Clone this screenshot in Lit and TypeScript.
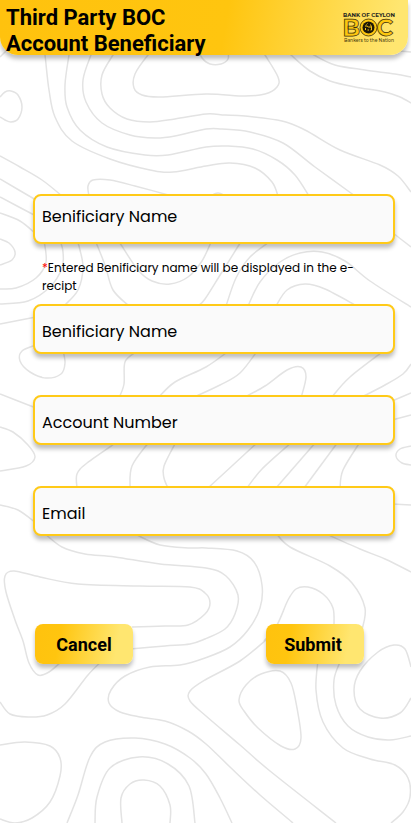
import { LitElement, html, svg, css } from "lit";
import { customElement } from "lit/decorators.js";

type Point = [number, number];

/** Contour lines of the background, as points that a smooth curve runs through. */
const OPEN_LINES: Point[][] = [
  [[0, 97], [5, 92], [11, 91], [18, 95], [22, 107], [18, 119], [11, 122], [5, 120], [0, 117]],
  [[0, 57], [6, 51]],
  [[43, 45], [45, 55], [49, 90], [55, 117], [72, 141], [110, 159], [150, 170], [173, 172], [206, 166], [230, 163], [255, 168], [272, 182], [278, 196]],
  [[71, 45], [69, 55], [65, 85], [67, 107], [80, 130], [107, 147], [145, 155], [168, 155], [206, 147], [228, 146], [253, 149], [277, 160], [295, 175], [309, 196]],
  [[96, 45], [91, 55], [83, 80], [86, 102], [102, 123], [130, 135], [155, 138], [175, 136], [206, 129], [222, 129], [250, 132], [283, 143], [315, 167], [355, 196]],
  [[120, 45], [113, 55], [102, 75], [102, 94], [110, 108], [127, 119], [150, 122], [175, 119], [206, 114], [225, 115], [245, 116], [282, 121], [305, 130], [340, 150], [380, 165], [398, 176], [411, 192]],
  [[158, 45], [148, 55], [135, 74], [134, 88], [142, 95], [160, 97], [206, 94], [245, 96], [265, 94], [277, 87], [278, 77], [265, 55], [262, 50]],
  [[199, 50], [202, 58], [210, 64], [221, 64], [228, 59], [228, 50]],
  [[284, 48], [291, 55], [310, 71], [330, 81], [355, 87], [385, 92], [400, 97], [411, 103]],
  [[304, 48], [314, 55], [335, 65], [365, 70], [395, 74], [411, 77]],
  [[400, 51], [411, 52]],
  [[89, 196], [88, 186], [93, 180], [110, 180], [135, 186], [172, 196]],
  [[210, 196], [218, 193], [226, 196]],
  [[0, 156], [20, 167], [42, 180], [62, 196]],
  [[0, 179], [36, 200]],
  [[0, 197], [36, 216]],
  [[0, 213], [20, 221], [36, 234]],
  [[0, 239], [9, 243], [15, 252], [12, 260], [0, 265]],
  [[0, 289], [16, 288], [36, 278], [46, 262], [44, 240]],
  [[0, 304], [28, 301], [50, 287], [62, 268], [63, 252], [60, 240]],
  [[0, 324], [36, 317]],
  [[65, 305], [78, 290], [83, 268], [80, 250], [77, 240]],
  [[95, 240], [105, 265], [113, 290], [129, 306]],
  [[118, 240], [138, 270], [152, 281], [170, 284], [188, 277], [202, 261], [212, 240]],
  [[198, 306], [205, 299], [222, 272], [242, 240]],
  [[226, 306], [236, 278], [250, 257], [272, 240]],
  [[248, 306], [260, 282], [280, 262], [300, 253], [322, 252], [345, 261], [370, 281], [411, 307]],
  [[276, 306], [287, 290], [305, 284], [325, 289], [357, 306]],
  [[393, 233], [411, 247]],
  [[36, 345], [22, 351], [20, 361], [30, 372], [46, 378], [61, 374], [65, 363], [63, 350]],
  [[136, 352], [125, 362], [124, 384], [119, 398]],
  [[158, 398], [175, 382], [206, 367], [230, 350]],
  [[192, 398], [220, 385], [240, 373], [258, 350]],
  [[243, 398], [265, 386], [287, 370], [301, 367], [306, 377], [301, 398]],
  [[331, 398], [350, 377], [385, 350]],
  [[360, 398], [385, 385], [403, 374], [411, 364]],
  [[392, 401], [411, 393]],
  [[392, 420], [411, 415]],
  [[0, 394], [36, 408]],
  [[0, 427], [13, 432], [28, 445], [35, 457], [26, 466], [0, 471]],
  [[117, 442], [87, 463], [77, 474], [77, 488]],
  [[149, 442], [132, 466], [130, 488]],
  [[176, 442], [164, 466], [164, 478], [168, 488]],
  [[258, 442], [208, 488]],
  [[292, 442], [262, 469], [247, 488]],
  [[316, 442], [276, 488]],
  [[338, 442], [304, 488]],
  [[360, 442], [343, 470], [340, 488]],
  [[411, 446], [400, 449], [396, 456], [402, 463], [411, 465]],
  [[392, 504], [411, 505]],
  [[0, 505], [18, 510], [36, 523]],
  [[44, 533], [62, 547], [85, 554], [115, 557], [160, 564], [206, 568], [226, 576], [238, 595], [235, 614], [225, 629], [205, 639], [190, 644], [165, 646], [130, 649]],
  [[135, 534], [160, 545], [190, 548], [206, 548], [237, 551], [254, 562], [262, 585], [260, 608], [248, 630], [230, 647], [205, 658], [180, 665], [150, 667], [125, 676], [111, 690], [109, 703], [120, 712], [140, 717], [165, 721], [188, 731], [206, 744], [230, 767], [260, 795], [293, 823]],
  [[276, 533], [290, 547], [330, 566], [352, 583], [365, 608], [362, 630]],
  [[324, 533], [360, 549], [385, 559], [411, 572]],
  [[264, 641], [277, 625], [288, 600], [296, 589], [308, 587], [323, 594], [333, 608], [334, 626]],
  [[340, 662], [334, 680], [336, 705], [348, 726], [368, 737], [390, 740], [411, 736]],
  [[132, 627], [165, 626], [188, 625], [205, 614], [210, 603], [205, 593], [190, 587], [140, 586], [78, 584], [40, 577], [14, 571], [5, 576], [6, 592], [15, 620], [23, 641], [29, 663], [38, 675], [49, 672], [63, 660]],
  [[103, 660], [88, 675], [65, 704], [47, 715], [28, 717], [10, 714], [0, 702]],
  [[266, 640], [240, 661], [205, 680], [190, 691], [190, 701], [206, 716], [240, 745], [270, 771], [336, 823]],
  [[0, 745], [25, 742], [50, 746], [60, 758], [60, 776], [50, 802], [32, 818], [15, 823], [0, 819]],
  [[67, 823], [78, 795], [90, 757], [105, 742], [135, 738], [165, 744], [190, 758], [206, 774], [220, 798], [232, 823]],
  [[95, 823], [97, 797], [110, 768], [139, 757], [168, 764], [189, 786], [195, 823]],
  [[122, 823], [121, 798], [130, 784], [144, 780], [160, 786], [170, 805], [170, 823]],
  [[318, 660], [316, 690], [323, 722], [343, 748], [370, 759], [395, 765], [408, 778], [410, 797], [403, 812], [391, 823]],
  [[411, 667], [405, 649], [394, 645], [378, 652], [360, 671], [354, 690], [360, 709], [380, 718], [400, 713], [411, 698]],
];

const CLOSED_LINES: Point[][] = [
  [[239, 700], [246, 685], [261, 674], [280, 671], [291, 683], [297, 708], [301, 738], [295, 749], [281, 746], [258, 728], [244, 711]],
];

/** Turns points into a smooth path (Catmull-Rom spline as cubic curves). */
function smoothPath(points: Point[], closed = false): string {
  const n = points.length;
  const at = (i: number): Point =>
    closed ? points[(i + n) % n] : points[Math.max(0, Math.min(n - 1, i))];
  let d = `M${points[0][0]} ${points[0][1]}`;
  for (let i = 0; i < (closed ? n : n - 1); i++) {
    const [a, b, c, e] = [at(i - 1), at(i), at(i + 1), at(i + 2)];
    const control = [
      b[0] + (c[0] - a[0]) / 6, b[1] + (c[1] - a[1]) / 6,
      c[0] - (e[0] - b[0]) / 6, c[1] - (e[1] - b[1]) / 6,
    ].map((v) => v.toFixed(1));
    d += `C${control.join(" ")} ${c[0]} ${c[1]}`;
  }
  return closed ? d + "Z" : d;
}

@customElement("contour-background")
class ContourBackground extends LitElement {
  static styles = css`
    :host { display: block; }
    .lines { display: block; width: 100%; height: 100%; fill: none; stroke: #e3e3e3; stroke-width: 1.5; }
  `;

  render() {
    return html`
      <svg class="lines" viewBox="0 0 411 823" preserveAspectRatio="xMidYMin slice" aria-hidden="true">
        ${OPEN_LINES.map((line) => svg`<path d=${smoothPath(line)} />`)}
        ${CLOSED_LINES.map((line) => svg`<path d=${smoothPath(line, true)} />`)}
      </svg>
    `;
  }
}

@customElement("boc-logo")
class BocLogo extends LitElement {
  static styles = css`
    :host { display: block; }
    .logo { display: block; width: 54px; height: 32px; font-family: Montserrat, Poppins, Inter, sans-serif; }
    .name { font-size: 11px; font-weight: 700; fill: #231f20; }
    .tagline { font-size: 9px; font-weight: 500; fill: #4a3c10; }
    .initial { font-size: 46px; font-weight: 700; fill: #fdc70f; stroke: #3d300a; stroke-width: 1.5; }
    .ring { fill: #fdc70f; stroke: #2b220a; stroke-width: 1.5; }
    .seal { fill: #1d1808; }
    .lion { fill: none; stroke: #f5c21a; stroke-width: 2; stroke-linejoin: round; }
  `;

  render() {
    return html`
      <svg class="logo" viewBox="0 0 108 64" role="img" aria-label="Bank of Ceylon">
        <text class="name" x="54" y="10" text-anchor="middle">BANK OF CEYLON</text>
        <text class="initial" x="1" y="47">B</text>
        <text class="initial" x="69" y="47">C</text>
        <circle class="ring" cx="53" cy="31" r="17" />
        <circle class="seal" cx="53" cy="31" r="12" />
        <path class="lion" d="M46 28h4l3 2h6M47 36v-4M51 36h3M57 36h2v-6l-2-5M49 25l2-2" />
        <text class="tagline" x="54" y="59" text-anchor="middle">Bankers to the Nation</text>
      </svg>
    `;
  }
}

@customElement("app-root")
class AppRoot extends LitElement {
  static styles = css`
    :host {
      display: block;
      position: relative;
      min-height: 100vh;
      background: #fff;
      color: #000;
      overflow: hidden;
      --shadow: 0 4px 4px rgba(0, 0, 0, 0.25);
    }
    * { box-sizing: border-box; }
    .background { position: absolute; inset: 0; }
    .page { position: relative; }
    .header {
      display: flex;
      justify-content: space-between;
      align-items: flex-start;
      height: 55px;
      margin-right: 3px;
      padding: 5px 12px 0 6px;
      border-radius: 0 0 18px 18px;
      background: linear-gradient(100deg, #ffc20e 0%, #ffc50f 55%, #ffe670 96%);
      box-shadow: var(--shadow);
    }
    .title { margin: 0; font: 700 22px/26px Roboto, sans-serif; }
    .logo { margin-top: 7px; }
    .form { padding: 139px 16px 24px 33px; font-family: Poppins, Inter, sans-serif; }
    .field {
      display: block;
      width: 100%;
      height: 50px;
      margin-bottom: 41px;
      padding: 4px 7px 0;
      border: 2px solid #ffca18;
      border-radius: 8px;
      background: #fafafa;
      box-shadow: var(--shadow);
      color: #000;
      font: 400 16px/24px Poppins, Inter, sans-serif;
      outline: none;
    }
    .field::placeholder { color: #000; opacity: 1; }
    .field.first { margin-bottom: 0; padding: 0 7px 6px; }
    .note { margin: 15px 24px 9px 9px; font-size: 12px; line-height: 18px; }
    .star { color: #f00; }
    .actions { display: flex; justify-content: space-between; margin: 88px 31px 0 2px; }
    .button {
      width: 98px;
      height: 40px;
      padding: 2px 0 0;
      border: 0;
      border-radius: 8px;
      background: linear-gradient(100deg, #ffc20e 0%, #ffc50f 25%, #ffe670 82%);
      box-shadow: var(--shadow);
      color: #000;
      font: 700 18px/24px Roboto, sans-serif;
      cursor: pointer;
    }
    .submit { padding-right: 4px; }
  `;

  render() {
    return html`
      <contour-background class="background"></contour-background>
      <div class="page">
        <header class="header">
          <h1 class="title">Third Party BOC<br />Account Beneficiary</h1>
          <boc-logo class="logo"></boc-logo>
        </header>
        <form class="form" @submit=${(e: Event) => e.preventDefault()}>
          <input class="field first" type="text" placeholder="Benificiary Name" aria-label="Benificiary Name" aria-describedby="name-note" />
          <p class="note" id="name-note"><span class="star">*</span>Entered Benificiary name will be displayed in the e-recipt</p>
          <input class="field" type="text" placeholder="Benificiary Name" aria-label="Benificiary Name" />
          <input class="field" type="text" placeholder="Account Number" aria-label="Account Number" />
          <input class="field" type="email" placeholder="Email" aria-label="Email" />
          <div class="actions">
            <button class="button" type="reset">Cancel</button>
            <button class="button submit" type="submit">Submit</button>
          </div>
        </form>
      </div>
    `;
  }
}
